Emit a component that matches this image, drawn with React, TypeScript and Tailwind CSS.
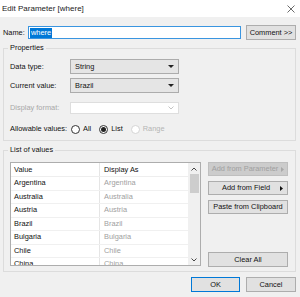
import React from "react";

const Select = ({ value }: { value: string }) => (
  <div className="w-[109px] h-[15px] bg-[#e5e5e5] border border-[#acacac] flex items-center pl-[4px] pr-[4px] text-[#111]">
    <span className="flex-1">{value}</span>
    <svg width="6" height="4" viewBox="0 0 6 4"><path d="M0 0 L6 0 L3 3 Z" fill="#222" /></svg>
  </div>
);

const Radio = ({ checked, disabled, label }: { checked?: boolean; disabled?: boolean; label: string }) => (
  <div className="flex items-center gap-[3px]">
    <div className={`w-[9px] h-[9px] rounded-full border flex items-center justify-center bg-white ${disabled ? "border-[#d5d5d5]" : "border-[#333]"}`}>
      {checked && <div className="w-[5px] h-[5px] rounded-full bg-[#222]" />}
    </div>
    <span className={disabled ? "text-[#b5b5b5]" : "text-[#111]"}>{label}</span>
  </div>
);

const GroupLabel = ({ children }: { children: React.ReactNode }) => (
  <span className="absolute left-[4px] top-[-6px] px-[2px] bg-[#f0f0f0] leading-[10px]">{children}</span>
);

const rows = ["Argentina", "Australia", "Austria", "Brazil", "Bulgaria", "Chile", "China"];

export default function App() {
  return (
    <div
      className="w-[300px] h-[297px] bg-[#f0f0f0] flex flex-col text-[7.4px] leading-[10px] text-[#111] overflow-hidden whitespace-nowrap"
      style={{ fontFamily: '"Liberation Sans", Arial, sans-serif' }}
    >
      {/* Title bar */}
      <div className="h-[17px] bg-white flex items-center pl-[2px] pr-[5px] shrink-0">
        <span className="flex-1 text-[8px] text-[#222]">Edit Parameter [where]</span>
        <svg width="8" height="8" viewBox="0 0 8 8"><path d="M0.5 0.5 L7.5 7.5 M7.5 0.5 L0.5 7.5" stroke="#444" strokeWidth="0.8" /></svg>
      </div>

      {/* Name row */}
      <div className="mt-[8px] h-[15px] flex items-center pl-[3px] pr-[4px] shrink-0">
        <span className="w-[25px]">Name:</span>
        <div className="w-[213px] h-[13px] bg-white border border-[#3a95e0] flex items-center pl-[1px]">
          <span className="bg-[#0078d7] text-white leading-[10px] px-[1px]">where</span>
        </div>
        <div className="ml-[5px] w-[50px] h-[15px] bg-[#e1e1e1] border border-[#adadad] flex items-center justify-center">
          Comment &gt;&gt;
        </div>
      </div>

      {/* Properties */}
      <div className="relative mt-[8px] ml-[3px] mr-[4px] h-[93px] border border-[#dcdcdc] pl-[6px] pt-[10px] shrink-0">
        <GroupLabel>Properties</GroupLabel>
        <div className="flex items-center">
          <span className="w-[60px]">Data type:</span>
          <Select value="String" />
        </div>
        <div className="mt-[4px] flex items-center">
          <span className="w-[60px]">Current value:</span>
          <Select value="Brazil" />
        </div>
        <div className="mt-[9px] flex items-center">
          <span className="w-[60px] text-[#a8a8a8]">Display format:</span>
          <div className="w-[109px] h-[12px] bg-white border border-[#dedede] flex items-center justify-end pr-[4px]">
            <svg width="6" height="4" viewBox="0 0 6 4"><path d="M0.5 0.5 L3 3 L5.5 0.5" stroke="#b5b5b5" strokeWidth="0.8" fill="none" /></svg>
          </div>
        </div>
        <div className="mt-[8px] h-[14px] flex items-center">
          <span className="w-[61px]">Allowable values:</span>
          <div className="flex items-center gap-[8px]">
            <Radio label="All" />
            <Radio label="List" checked />
            <Radio label="Range" disabled />
          </div>
        </div>
      </div>

      {/* List of values */}
      <div className="relative mt-[9px] ml-[3px] mr-[4px] h-[122px] border border-[#dcdcdc] pl-[6px] pt-[11px] shrink-0">
        <GroupLabel>List of values</GroupLabel>
        <div className="flex">
          <div className="w-[191px] h-[104px] bg-white border border-[#adadad] flex overflow-hidden">
            <div className="flex-1 flex flex-col">
              <div className="h-[14px] flex shrink-0 border-b border-[#eeeeee]">
                <div className="w-[89px] pl-[3px] flex items-center border-r border-[#e5e5e5]">Value</div>
                <div className="flex-1 pl-[4px] flex items-center">Display As</div>
              </div>
              {rows.map((r) => (
                <div key={r} className="h-[13.5px] flex shrink-0 border-b border-[#f0f0f0]">
                  <div className="w-[89px] pl-[3px] flex items-center border-r border-[#e5e5e5]">{r}</div>
                  <div className="flex-1 pl-[4px] flex items-center text-[#a0a0a0]">{r}</div>
                </div>
              ))}
            </div>
            <div className="w-[12px] bg-[#f0f0f0] flex flex-col items-center">
              <div className="h-[11px] flex items-center justify-center">
                <svg width="6" height="4" viewBox="0 0 6 4"><path d="M0.5 3.5 L3 1 L5.5 3.5" stroke="#333" strokeWidth="0.9" fill="none" /></svg>
              </div>
              <div className="w-[9px] h-[19px] bg-[#cdcdcd]" />
              <div className="flex-1" />
              <div className="h-[11px] flex items-center justify-center">
                <svg width="6" height="4" viewBox="0 0 6 4"><path d="M0.5 0.5 L3 3 L5.5 0.5" stroke="#333" strokeWidth="0.9" fill="none" /></svg>
              </div>
            </div>
          </div>
          <div className="ml-[7px] w-[80px] flex flex-col">
            <div className="h-[14px] bg-[#cccccc] border border-[#bfbfbf] flex items-center justify-center pr-[6px] text-[#a0a0a0] relative">
              Add from Parameter
              <svg className="absolute right-[3px]" width="3" height="5" viewBox="0 0 3 5"><path d="M0 0 L3 2.5 L0 5 Z" fill="#a8a8a8" /></svg>
            </div>
            <div className="mt-[5px] h-[14px] bg-[#e1e1e1] border border-[#adadad] flex items-center justify-center pr-[4px] relative">
              Add from Field
              <svg className="absolute right-[4px]" width="3" height="5" viewBox="0 0 3 5"><path d="M0 0 L3 2.5 L0 5 Z" fill="#111" /></svg>
            </div>
            <div className="mt-[5px] h-[14px] bg-[#e1e1e1] border border-[#adadad] flex items-center justify-center">
              Paste from Clipboard
            </div>
            <div className="flex-1" />
            <div className="mb-[-1px] h-[15px] bg-[#e1e1e1] border border-[#adadad] flex items-center justify-center">
              Clear All
            </div>
          </div>
        </div>
      </div>

      {/* OK / Cancel */}
      <div className="mt-[5px] flex justify-end gap-[6px] pr-[4px] shrink-0">
        <div className="w-[49px] h-[15px] bg-[#e1e1e1] border border-[#0078d7] flex items-center justify-center">OK</div>
        <div className="w-[50px] h-[15px] bg-[#e1e1e1] border border-[#adadad] flex items-center justify-center">Cancel</div>
      </div>
    </div>
  );
}
